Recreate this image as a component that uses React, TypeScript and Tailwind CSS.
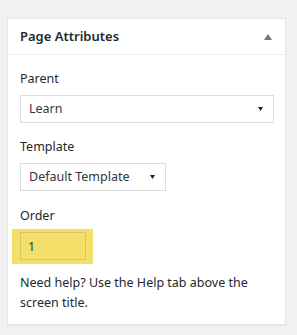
import React from 'react';

const font = { fontFamily: '"Noto Sans", "Open Sans", sans-serif' };

const FakeSelect: React.FC<{ value: string; width: string }> = ({ value, width }) => (
  <div className={`${width} h-[28px] flex items-center justify-between border border-[#dddddd] bg-white pl-[8px] pr-[10px] text-[12.5px] text-[#32373c]`}>
    <span>{value}</span>
    <svg width="5" height="4" viewBox="0 0 5 4">
      <path d="M0 0 L5 0 L2.5 4 Z" fill="#1e1e1e" />
    </svg>
  </div>
);

export default function App() {
  return (
    <div className="min-h-[335px] bg-[#f1f1f1] pt-[18px] pl-[7px]" style={font}>
      <div className="w-[279px] border border-[#e5e5e5] bg-white shadow-[0_1px_1px_rgba(0,0,0,0.04)]">
        <div className="h-[36px] flex items-center justify-between border-b border-[#eeeeee] pl-[12px] pr-[13px]">
          <h2 className="text-[13px] font-semibold text-[#23282d]">Page Attributes</h2>
          <svg width="8" height="6" viewBox="0 0 8 6" className="mt-[1px]">
            <path d="M4 0 L8 6 L0 6 Z" fill="#72777c" />
          </svg>
        </div>

        <div className="px-[12px] pb-[11px] text-[12.5px] text-[#23282d]">
          <p className="pt-[14px] leading-[20px]">Parent</p>
          <div className="mt-[6px]">
            <FakeSelect value="Learn" width="w-[254px]" />
          </div>

          <p className="mt-[14px] leading-[20px]">Template</p>
          <div className="mt-[6px]">
            <FakeSelect value="Default Template" width="w-[146px]" />
          </div>

          <p className="mt-[15px] leading-[20px]">Order</p>
          <div className="mt-[3px] -ml-[8px] w-[81px] bg-[#f4df6a] pl-[8px] pt-[3px] pb-[4px]">
            <input
              type="text"
              defaultValue="1"
              className="w-[66px] h-[28px] border border-[#d8c75c] bg-transparent px-[7px] text-[12.5px] text-[#32373c] outline-none"
            />
          </div>

          <p className="mt-[9px] leading-[20px]">Need help? Use the Help tab above the screen title.</p>
        </div>
      </div>
    </div>
  );
}
